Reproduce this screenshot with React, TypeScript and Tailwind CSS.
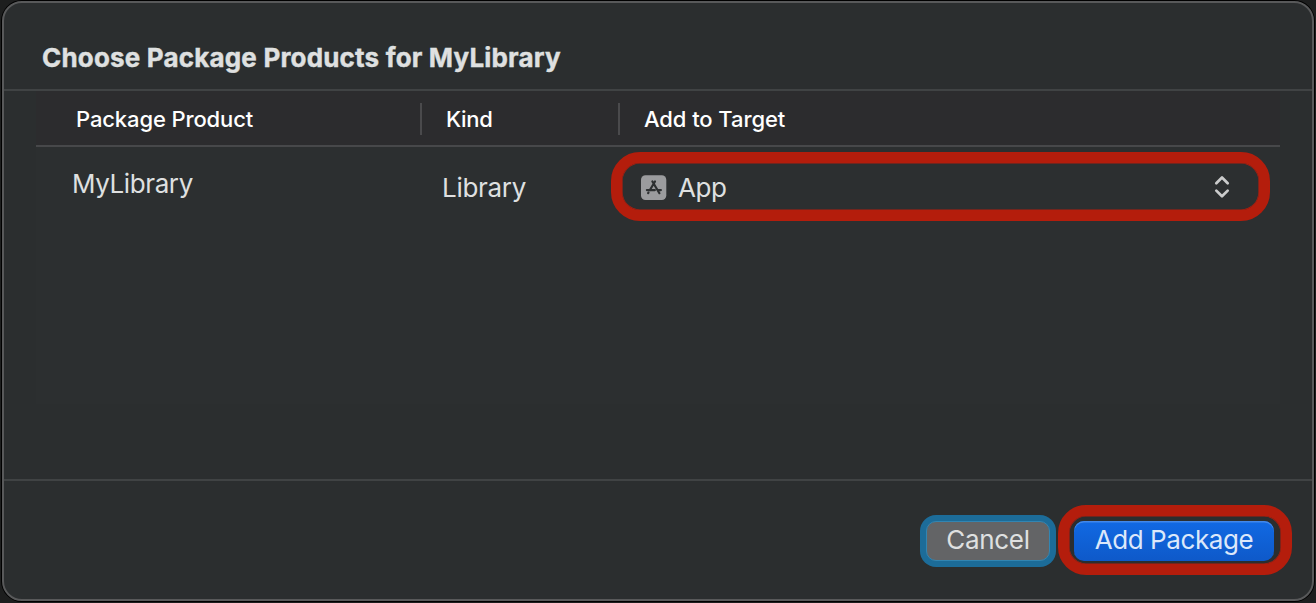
function AppIcon() {
  return (
    <svg width="26" height="26" viewBox="0 0 26 26" className="block shrink-0">
      <rect x="0" y="0.3" width="25.3" height="24.7" rx="4.5" fill="#9b9c9e" />
      <g stroke="#2d3031" strokeWidth="2.2" strokeLinecap="round" fill="none">
        <path d="M14 6.5 8.9 15M11.4 6.5 18.4 18.2" />
        <path d="M5.9 15.1h8M17.4 15.1h2.5M7.5 17.6 7.1 18.2" />
      </g>
    </svg>
  );
}

function UpDownChevrons() {
  return (
    <svg width="16" height="24" viewBox="0 0 16 24" className="block" fill="none" stroke="#cbcccc" strokeWidth="2.7" strokeLinecap="round" strokeLinejoin="round">
      <path d="M2.3 8.2 8 2.5l5.7 5.7M2.3 15.6 8 21.3l5.7-5.7" />
    </svg>
  );
}

export default function App() {
  return (
    <div className="h-[603px] w-[1316px] overflow-hidden bg-[#1d1e1e] pl-[2px] pt-px font-['Inter','Liberation_Sans',sans-serif] text-[#dfe0e0]">
      <main className="flex h-[600px] w-[1312px] flex-col rounded-[20px] border-2 border-[#58595a] bg-[#2b2e2f] shadow-[0_0_0_1px_#000]">
        <header className="flex h-[88px] shrink-0 items-start border-b-2 border-[#404344] pl-[38px] pt-[38px]">
          <h1 className="whitespace-nowrap text-[26px] font-bold leading-[34px] tracking-[0.18px] [-webkit-text-stroke:0.4px_#dfe0e0]">Choose Package Products for MyLibrary</h1>
        </header>

        <section className="mx-8 flex h-[313px] shrink-0 flex-col bg-[#2c2f30]">
          <div className="flex h-[56px] shrink-0 items-center border-b-2 border-[#47484a] bg-[#2c2c2e] pt-[2px] text-[22px] font-medium leading-7 text-white">
            <div className="w-[384px] pl-[40px]"><span className="tracking-[-0.12px]">Package Product</span></div>
            <div className="h-8 w-0.5 bg-[#4a4a4c]" />
            <div className="w-[196px] pl-[24px]"><span className="tracking-[-0.3px]">Kind</span></div>
            <div className="h-8 w-0.5 bg-[#4a4a4c]" />
            <div className="pl-[24px]"><span className="tracking-[-0.08px]">Add to Target</span></div>
          </div>
          <div className="relative flex h-[78px] items-start pt-[20px] text-[26px] leading-[34px]">
            <div className="w-[406px] pl-[36px]"><span className="tracking-[-0.4px]">MyLibrary</span></div>
            <div className="w-[198px] pt-1"><span className="tracking-[-0.3px]">Library</span></div>
            <button className="flex h-[34px] w-[590px] items-center pl-px pt-2">
              <AppIcon />
              <span className="ml-[11px] tracking-[-0.4px]">App</span>
              <span className="ml-auto pb-[2px]"><UpDownChevrons /></span>
            </button>
            <div className="pointer-events-none absolute left-[575px] top-[5px] h-[69px] w-[659px] rounded-[29px] border-[11px] border-[#b41d0c] shadow-[inset_0_0_0_0.6px_#b41d0c]" />
          </div>
        </section>

        <footer className="mt-[75px] flex flex-1 items-start border-t-2 border-[#404344] pl-[922px] pt-[40px] text-[26px] leading-[36px]">
          <button className="h-[40px] w-[124px] rounded-[10px] border border-[#3285b2] bg-[#636466] pb-[2px] shadow-[0_0_0_6px_#1c6c99]">
            <span className="block tracking-[-0.3px]">Cancel</span>
          </button>
          <div className="relative ml-[24px]">
            <button className="h-[40px] w-[200px] rounded-[10px] bg-linear-to-b from-[#1169e3] to-[#0e59c9] pb-[2px] text-[#dce8fa] shadow-[inset_0_1.5px_0_#4288ea]">
              <span className="block tracking-[-0.4px]">Add Package</span>
            </button>
            <div className="pointer-events-none absolute -left-[16px] -top-[16px] h-[70px] w-[234px] rounded-[28px] border-[11px] border-[#b41d0c] shadow-[inset_0_0_0_0.6px_#b41d0c]" />
          </div>
        </footer>
      </main>
    </div>
  );
}
